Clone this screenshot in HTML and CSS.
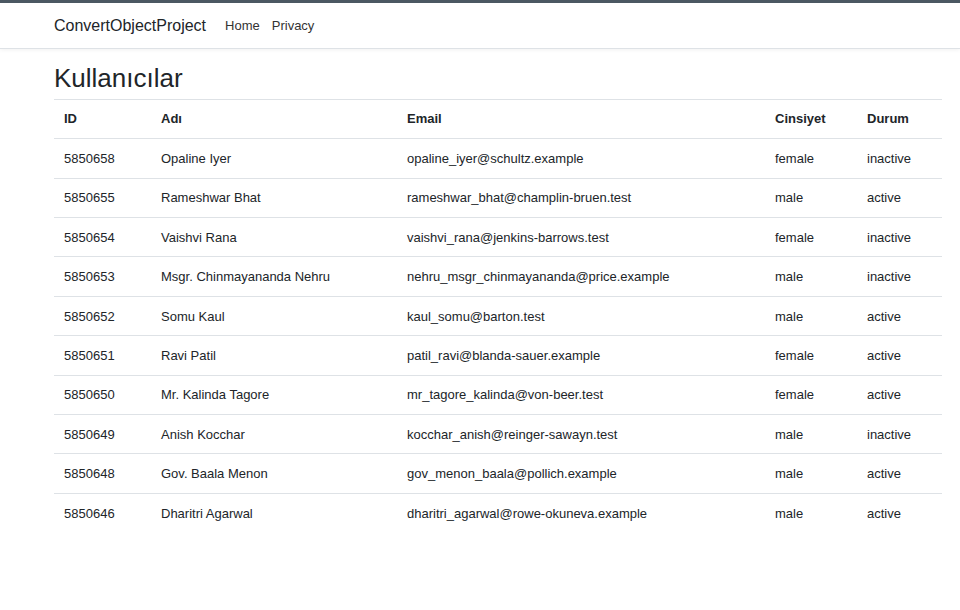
FILE: index.html
```html
<!DOCTYPE html>
<html lang="tr">
<head>
<meta charset="utf-8">
<title>Kullanıcılar</title>
<link rel="stylesheet" href="styles.css">
</head>
<body>
<header class="navbar">
  <div class="nav-inner">
    <a class="brand" href="#">ConvertObjectProject</a>
    <a class="nav-link" href="#">Home</a>
    <a class="nav-link" href="#">Privacy</a>
  </div>
</header>
<main class="container">
  <h1 class="title">Kullanıcılar</h1>
  <table class="users">
    <colgroup>
      <col class="c-id"><col class="c-name"><col class="c-email"><col class="c-gender"><col class="c-status">
    </colgroup>
    <thead>
      <tr><th>ID</th><th>Adı</th><th>Email</th><th>Cinsiyet</th><th>Durum</th></tr>
    </thead>
    <tbody>
      <tr><td>5850658</td><td>Opaline Iyer</td><td>opaline_iyer@schultz.example</td><td>female</td><td>inactive</td></tr>
      <tr><td>5850655</td><td>Rameshwar Bhat</td><td>rameshwar_bhat@champlin-bruen.test</td><td>male</td><td>active</td></tr>
      <tr><td>5850654</td><td>Vaishvi Rana</td><td>vaishvi_rana@jenkins-barrows.test</td><td>female</td><td>inactive</td></tr>
      <tr><td>5850653</td><td>Msgr. Chinmayananda Nehru</td><td>nehru_msgr_chinmayananda@price.example</td><td>male</td><td>inactive</td></tr>
      <tr><td>5850652</td><td>Somu Kaul</td><td>kaul_somu@barton.test</td><td>male</td><td>active</td></tr>
      <tr><td>5850651</td><td>Ravi Patil</td><td>patil_ravi@blanda-sauer.example</td><td>female</td><td>active</td></tr>
      <tr><td>5850650</td><td>Mr. Kalinda Tagore</td><td>mr_tagore_kalinda@von-beer.test</td><td>female</td><td>active</td></tr>
      <tr><td>5850649</td><td>Anish Kocchar</td><td>kocchar_anish@reinger-sawayn.test</td><td>male</td><td>inactive</td></tr>
      <tr><td>5850648</td><td>Gov. Baala Menon</td><td>gov_menon_baala@pollich.example</td><td>male</td><td>active</td></tr>
      <tr><td>5850646</td><td>Dharitri Agarwal</td><td>dharitri_agarwal@rowe-okuneva.example</td><td>male</td><td>active</td></tr>
    </tbody>
  </table>
</main>
</body>
</html>
```
FILE: styles.css
```css
* { box-sizing: border-box; }
html, body { margin: 0; padding: 0; }
body {
  font-family: "Liberation Sans", Arial, sans-serif;
  font-size: 13px;
  line-height: 1.5;
  color: #212529;
  background: #fff;
}
.navbar {
  border-top: 3px solid #4b5862;
  border-bottom: 1px solid #dee2e6;
  box-shadow: 0 1px 4px rgba(0,0,0,0.06);
  height: 49px;
}
.nav-inner {
  display: flex;
  align-items: center;
  height: 45px;
  padding-left: 54px;
}
.brand {
  font-size: 16px;
  color: #212529;
  text-decoration: none;
  margin-right: 15px;
}
.nav-link {
  color: #333;
  text-decoration: none;
  padding: 0 4px;
}
.nav-link + .nav-link { margin-left: 4px; }
.container {
  padding: 0 18px 0 54px;
}
.title {
  font-size: 26px;
  font-weight: 500;
  margin: 14px 0 5px;
  line-height: 1.2;
}
.users {
  width: 888px;
  border-collapse: collapse;
  table-layout: fixed;
}
.c-id { width: 97px; }
.c-name { width: 246px; }
.c-email { width: 368px; }
.c-gender { width: 92px; }
.c-status { width: 85px; }
.users th, .users td {
  text-align: left;
  padding: 9.45px 10px;
  border-top: 1px solid #dee2e6;
  white-space: nowrap;
}
.users td { padding-top: 9.9px; padding-bottom: 9px; }
.users th {
  font-weight: 700;
  padding-top: 9.25px;
  padding-bottom: 9.25px;
}
```
